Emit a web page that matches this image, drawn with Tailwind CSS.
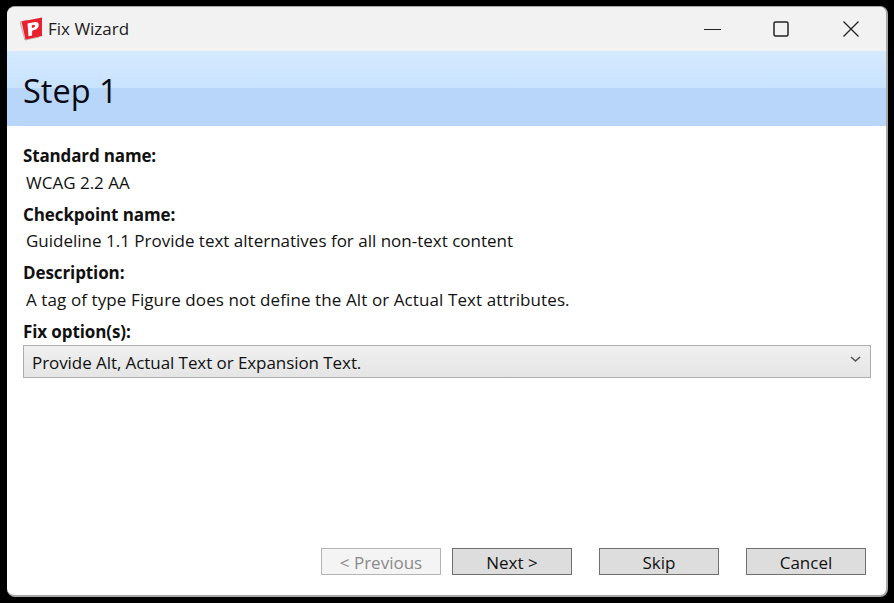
<!DOCTYPE html>
<html lang="en">
  <head>
    <meta charset="UTF-8" />
    <meta name="viewport" content="width=device-width, initial-scale=1.0" />
    <title>Fix Wizard</title>
    <script src="https://cdn.jsdelivr.net/npm/@tailwindcss/browser@4"></script>
  </head>
  <body class="bg-black w-[894px] h-[603px] overflow-hidden font-['Open_Sans','Noto_Sans',sans-serif] text-[#111]">
    <div class="ml-[7px] mt-[6px] w-[881px] h-[591px] bg-white rounded-[8px] border-t border-r-2 border-b-2 border-[#a8a8a8] border-l-0 overflow-hidden flex flex-col">
      <!-- title bar -->
      <div class="h-[44px] shrink-0 bg-[#f2f2f2] flex items-center pl-[12px]">
        <svg width="24" height="24" viewBox="0 0 24 24" class="shrink-0">
          <path d="M1 5 L6 23 L20 20 L8 3 Z" fill="#f0dfdf" stroke="#b08f8f" stroke-width="0.7" />
          <path d="M2.5 4.5 L23 0.5 L23 19 L6.5 22.5 Z" fill="#e8212f" />
          <path d="M8.5 6.5 L16 5 C20 4.7 20.5 8 19 10.5 C17.5 12.8 15 13.3 13.2 13.5 L13 18.5 L9.5 19.2 Z" fill="#fff" />
          <path d="M12.8 8.2 L15 7.8 C16.5 7.8 16.3 10.2 14.8 10.6 L12.8 11 Z" fill="#e8212f" />
        </svg>
        <span class="ml-[5px] text-[17px] text-[#1a1a1a]">Fix Wizard</span>
        <div class="ml-auto flex items-center">
          <svg width="18" height="18" viewBox="0 0 18 18" class="mr-[51px]"><path d="M0 9.5 H17" stroke="#222" stroke-width="1" /></svg>
          <svg width="16" height="16" viewBox="0 0 16 16" class="mr-[53px]"><rect x="1" y="1" width="14" height="14" rx="1.5" fill="none" stroke="#222" stroke-width="1.5" /></svg>
          <svg width="18" height="18" viewBox="0 0 18 18" class="mr-[26px]"><path d="M1.5 1.5 L16.5 16.5 M16.5 1.5 L1.5 16.5" stroke="#222" stroke-width="1.3" /></svg>
        </div>
      </div>

      <!-- banner -->
      <div class="h-[75px] shrink-0 relative flex items-center pl-[16px] pt-[5px] bg-[linear-gradient(to_bottom,#d5eaff_0,#c9e3fe_37px,#b8d6fa_37px,#b8d6fa_100%)]">
        <h1 class="text-[32.5px] leading-none text-[#0a0a14] font-normal">Step 1</h1>
      </div>

      <!-- form -->
      <div class="flex-1 px-[16px] pt-[17px] flex flex-col text-[17px] leading-[26px]">
        <div class="font-bold tracking-[-0.15px]">Standard name:</div>
        <div class="pl-[3px] mt-[1px]">WCAG 2.2 AA</div>
        <div class="font-bold tracking-[-0.1px] mt-[6px]">Checkpoint name:</div>
        <div class="pl-[3px]">Guideline 1.1 Provide text alternatives for all non-text content</div>
        <div class="font-bold tracking-[-0.1px] mt-[6px]">Description:</div>
        <div class="pl-[3px] mt-[1px] tracking-[0.1px]">A tag of type Figure does not define the Alt or Actual Text attributes.</div>
        <div class="font-bold tracking-[-0.1px] mt-[6px]">Fix option(s):</div>
        <div class="w-[848px] h-[33px] border border-[#adadad] bg-[linear-gradient(to_bottom,#f0f0f0,#e5e5e5)] flex items-center pl-[8px] pr-[9px]">
          <span class="relative top-[1px] tracking-[-0.07px]">Provide Alt, Actual Text or Expansion Text.</span>
          <svg width="11" height="7" viewBox="0 0 11 7" class="ml-auto mb-[4px]"><path d="M1 1 L5.5 5 L10 1" fill="none" stroke="#555" stroke-width="1.6" /></svg>
        </div>

        <!-- buttons -->
        <div class="mt-[170px] flex text-[#111]">
          <button class="ml-[298px] w-[120px] h-[27px] pt-[1px] border border-[#b4b4b4] bg-[#f4f4f4] text-[#8a8a8a] leading-none">&lt; Previous</button>
          <button class="ml-[11px] w-[120px] h-[27px] pt-[1px] border border-[#707070] bg-[#dddddd] leading-none">Next &gt;</button>
          <button class="ml-[27px] w-[120px] h-[27px] pt-[1px] border border-[#707070] bg-[#dddddd] leading-none">Skip</button>
          <button class="ml-[27px] w-[120px] h-[27px] pt-[1px] border border-[#707070] bg-[#dddddd] leading-none">Cancel</button>
        </div>
      </div>
    </div>
  </body>
</html>
